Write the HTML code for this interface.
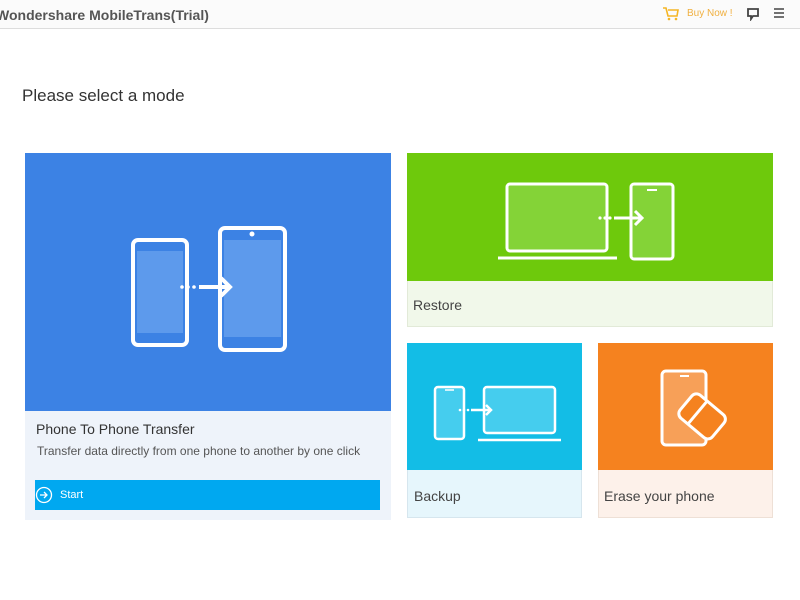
<!DOCTYPE html>
<html><head><meta charset="utf-8"><style>
body{margin:0;width:800px;height:600px;background:#fff;font-family:"Liberation Sans",sans-serif;position:relative;overflow:hidden}
.abs{position:absolute}
.t{color:#444;font-size:14px}
</style></head><body>
<div class="abs" style="left:0;top:0;width:800px;height:28px;background:#fbfbfb;border-bottom:1px solid #ddd"></div>
<div class="abs" style="left:-4px;top:7px;font-size:14px;font-weight:bold;color:#555">Wondershare MobileTrans(Trial)</div>
<svg class="abs" style="left:662px;top:6px" width="18" height="16" viewBox="0 0 18 16"><path d="M1 2h3l2 8h9l1-6H6" fill="none" stroke="#f5b625" stroke-width="1.6"/><circle cx="7" cy="13" r="1.3" fill="#f5b625"/><circle cx="14" cy="13" r="1.3" fill="#f5b625"/></svg>
<div class="abs" style="left:687px;top:8px;font-size:10px;color:#f0b040">Buy Now !</div>
<svg class="abs" style="left:746px;top:7px" width="14" height="14" viewBox="0 0 14 14"><path d="M2 2h10v7H7l-2 3V9H2z" fill="none" stroke="#444" stroke-width="1.8"/></svg>
<svg class="abs" style="left:773px;top:7px" width="12" height="12" viewBox="0 0 12 12"><path d="M1 2h10M1 6h10M1 10h10" stroke="#444" stroke-width="1.6"/></svg>
<div class="abs" style="left:22px;top:86px;font-size:17px;color:#333">Please select a mode</div>

<div class="abs" style="left:25px;top:153px;width:366px;height:367px;background:#eef3fa"></div>
<div class="abs" style="left:25px;top:153px;width:366px;height:258px;background:#3c82e4"></div>
<svg class="abs" style="left:25px;top:153px" width="366" height="258">
<rect x="108" y="87" width="54" height="105" rx="5" fill="none" stroke="#fff" stroke-width="4"/>
<rect x="112" y="98" width="46" height="82" fill="#5d9aec"/>
<rect x="195" y="75" width="65" height="122" rx="5" fill="none" stroke="#fff" stroke-width="4"/>
<rect x="199" y="87" width="57" height="97" fill="#5d9aec"/>
<circle cx="227" cy="81" r="2.5" fill="#fff"/>
<circle cx="157" cy="134" r="1.8" fill="#fff"/><circle cx="163" cy="134" r="1.8" fill="#fff"/><circle cx="169" cy="134" r="1.8" fill="#fff"/>
<path d="M174 134h30M196 125l9 9-9 9" fill="none" stroke="#fff" stroke-width="4"/>
</svg>
<div class="abs t" style="left:36px;top:421px;font-size:14px;color:#333">Phone To Phone Transfer</div>
<div class="abs" style="left:37px;top:444px;font-size:12px;color:#555">Transfer data directly from one phone to another by one click</div>
<div class="abs" style="left:35px;top:480px;width:345px;height:30px;background:#00a8f0"></div>
<svg class="abs" style="left:35px;top:486px" width="18" height="18"><circle cx="9" cy="9" r="7.5" fill="none" stroke="#fff" stroke-width="1.3"/><path d="M5 9h7M9 6l3 3-3 3" fill="none" stroke="#fff" stroke-width="1.3"/></svg>
<div class="abs" style="left:60px;top:489px;font-size:11px;color:#fff">Start</div>

<div class="abs" style="left:407px;top:153px;width:365px;height:173px;background:#f1f8ea;border:1px solid #e2ead8;box-sizing:border-box;width:366px;height:174px"></div>
<div class="abs" style="left:407px;top:153px;width:366px;height:128px;background:#6ec90c"></div>
<svg class="abs" style="left:407px;top:153px" width="366" height="128">
<rect x="100" y="31" width="100" height="67" rx="3" fill="#84d337" stroke="#fff" stroke-width="3"/>
<path d="M91 105h119" stroke="#fff" stroke-width="3"/>
<rect x="224" y="31" width="42" height="75" rx="3" fill="#84d337" stroke="#fff" stroke-width="3"/>
<path d="M240 37h10" stroke="#fff" stroke-width="2"/>
<circle cx="193" cy="65" r="1.6" fill="#fff"/><circle cx="198" cy="65" r="1.6" fill="#fff"/><circle cx="203" cy="65" r="1.6" fill="#fff"/>
<path d="M207 65h27M228 58l7 7-7 7" fill="none" stroke="#fff" stroke-width="3"/>
</svg>
<div class="abs t" style="left:413px;top:297px">Restore</div>

<div class="abs" style="left:407px;top:343px;width:175px;height:175px;background:#e6f6fc;border:1px solid #d6e6ee;box-sizing:border-box"></div>
<div class="abs" style="left:407px;top:343px;width:175px;height:127px;background:#13bde6"></div>
<svg class="abs" style="left:407px;top:343px" width="175" height="127">
<rect x="28" y="44" width="29" height="52" rx="3" fill="#45cdee" stroke="#fff" stroke-width="2.5"/>
<path d="M38 47h9" stroke="#fff" stroke-width="1.5"/>
<rect x="77" y="44" width="71" height="46" rx="3" fill="#45cdee" stroke="#fff" stroke-width="2.5"/>
<path d="M71 97h83" stroke="#fff" stroke-width="2.5"/>
<circle cx="53" cy="67" r="1.3" fill="#fff"/><circle cx="57" cy="67" r="1.3" fill="#fff"/><circle cx="61" cy="67" r="1.3" fill="#fff"/>
<path d="M64 67h20M79 62l5 5-5 5" fill="none" stroke="#fff" stroke-width="2.5"/>
</svg>
<div class="abs t" style="left:414px;top:488px">Backup</div>

<div class="abs" style="left:598px;top:343px;width:175px;height:175px;background:#fdf1ea;border:1px solid #eee0d6;box-sizing:border-box"></div>
<div class="abs" style="left:598px;top:343px;width:175px;height:127px;background:#f5821f"></div>
<svg class="abs" style="left:598px;top:343px" width="175" height="127">
<rect x="64" y="28" width="44" height="74" rx="4" fill="#f7a058" stroke="#fff" stroke-width="3"/>
<path d="M82 33h9" stroke="#fff" stroke-width="2"/>
<g transform="rotate(40 104 72)"><rect x="84" y="58" width="42" height="30" rx="6" fill="#f5821f" stroke="#fff" stroke-width="3"/><path d="M99 58v30" stroke="#fff" stroke-width="3"/></g>
</svg>
<div class="abs t" style="left:604px;top:488px">Erase your phone</div>
</body></html>
